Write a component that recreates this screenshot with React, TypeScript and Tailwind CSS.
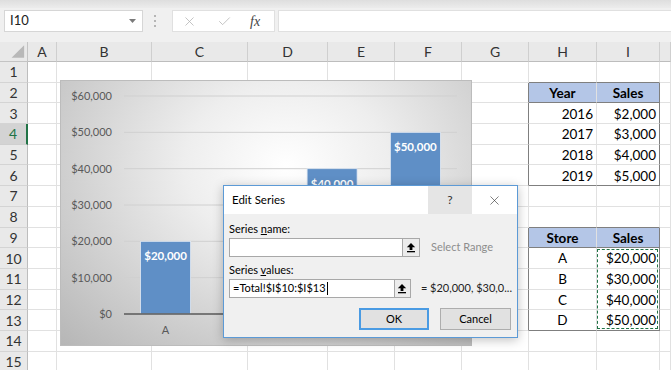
import { X, Check } from 'lucide-react'

const letters = ['A', 'B', 'C', 'D', 'E', 'F', 'G', 'H', 'I', '']
const rows = Array.from({ length: 15 }, (_, i) => i + 1)

const years = [
  ['2016', '$2,000'],
  ['2017', '$3,000'],
  ['2018', '$4,000'],
  ['2019', '$5,000'],
]
const stores = [
  ['A', '$20,000'],
  ['B', '$30,000'],
  ['C', '$40,000'],
  ['D', '$50,000'],
]

type Cell = { text: string; align: 'left' | 'center' | 'right'; bold?: boolean }

function cellData(r: number, c: number): Cell | null {
  if (r === 2 && c === 7) return { text: 'Year', align: 'center', bold: true }
  if (r === 2 && c === 8) return { text: 'Sales', align: 'center', bold: true }
  if (r >= 3 && r <= 6 && c === 7) return { text: years[r - 3][0], align: 'right' }
  if (r >= 3 && r <= 6 && c === 8) return { text: years[r - 3][1], align: 'right' }
  if (r === 9 && c === 7) return { text: 'Store', align: 'center', bold: true }
  if (r === 9 && c === 8) return { text: 'Sales', align: 'center', bold: true }
  if (r >= 10 && r <= 13 && c === 7) return { text: stores[r - 10][0], align: 'center' }
  if (r >= 10 && r <= 13 && c === 8) return { text: stores[r - 10][1], align: 'right' }
  return null
}

const inTable = (r: number) => (r >= 2 && r <= 6) || (r >= 9 && r <= 13)

function GridCell({ r, c }: { r: number; c: number }) {
  const d = cellData(r, c)
  const darkR = (c === 6 || c === 8) && inTable(r)
  const darkB = (c === 7 || c === 8) && [1, 2, 6, 8, 9, 13].includes(r)
  const head = (r === 2 || r === 9) && (c === 7 || c === 8)
  return (
    <div
      className={[
        'flex items-center border-r border-b px-[3px] pt-[1px] text-[13.5px] text-black',
        darkR ? 'border-r-[#7f7f7f]' : 'border-r-[#e1e1e1]',
        darkB ? 'border-b-[#7f7f7f]' : 'border-b-[#e1e1e1]',
        head ? 'bg-[#b4c6e7]' : 'bg-white',
        d?.align === 'center' ? 'justify-center' : d?.align === 'right' ? 'justify-end' : 'justify-start',
        d?.bold ? 'font-bold' : '',
      ].join(' ')}
    >
      {d?.text}
    </div>
  )
}

function UpArrow() {
  return (
    <svg width="10" height="11" viewBox="0 0 10 11">
      <path d="M5 1 L9.2 5.2 H6.4 V8 H3.6 V5.2 H0.8 Z" fill="#000" />
      <rect x="1" y="9" width="8" height="1.3" fill="#000" />
    </svg>
  )
}

function Chart() {
  const base = 233
  const step = 36.33
  const centers = [104.6, 187.9, 271.1, 354.4]
  const vals = [2, 3, 4, 5]
  const cats = ['A', 'B', 'C', 'D']
  return (
    <div className="absolute left-[60px] top-[80px] w-[412px] h-[266px] border border-[#bcbcbc] bg-[radial-gradient(ellipse_at_55%_32%,#ffffff_0%,#eeeeee_32%,#b6b6b6_100%)]">
      <svg width="410" height="264" className="font-['Lato']">
        {[0, 1, 2, 3, 4, 5, 6].map(i => (
          <g key={i}>
            {i > 0 && (
              <line x1="63" x2="396" y1={base - i * step} y2={base - i * step} stroke="#d0d0d0" strokeWidth="1" />
            )}
            <text x="51" y={base - i * step + 4} textAnchor="end" fontSize="11" fill="#595959">
              {i === 0 ? '$0' : `$${i * 10},000`}
            </text>
          </g>
        ))}
        {centers.map((cx, i) => {
          const h = vals[i] * step
          return (
            <g key={i}>
              <rect x={cx - 25} y={base - h} width="50" height={h} fill="#5f8fc6" stroke="#dfe8f3" strokeWidth="0.8" />
              <text x={cx} y={base - h + 19} textAnchor="middle" fontSize="11.5" fontWeight="700" fill="#fff">
                ${vals[i] * 10},000
              </text>
              <text x={cx} y="253" textAnchor="middle" fontSize="11" fill="#595959">
                {cats[i]}
              </text>
            </g>
          )
        })}
        <line x1="63" x2="396" y1={base} y2={base} stroke="#595959" strokeWidth="1.6" />
      </svg>
    </div>
  )
}

function EditSeries() {
  return (
    <div className="absolute left-[223px] top-[185px] w-[295px] h-[153px] border border-[#5c9ad6] bg-[#f0f0f0] shadow-[0_2px_10px_rgba(0,0,0,0.25)] text-[11px] text-black flex flex-col">
      <div className="h-[28px] bg-white flex items-stretch">
        <div className="flex-1 flex items-center pl-[8px] text-[11.5px]">Edit Series</div>
        <div className="w-[44px] bg-[#e5e5e5] flex items-center justify-center text-[12px] text-[#333]">?</div>
        <div className="w-[45px] flex items-center justify-center">
          <X size={15} strokeWidth={1} color="#333" />
        </div>
      </div>
      <div className="px-[5px] pt-[8px] flex flex-col">
        <div className="leading-[14px]">
          Series <u>n</u>ame:
        </div>
        <div className="mt-[2px] h-[19px] flex items-center">
          <div className="w-[174px] h-full bg-white border border-[#a8a8a8]" />
          <div className="w-[17px] h-full bg-[#ececec] border border-l-0 border-[#a8a8a8] flex items-center justify-center">
            <UpArrow />
          </div>
          <div className="ml-[11px] text-[#8d8d8d] whitespace-nowrap">Select Range</div>
        </div>
        <div className="mt-[6px] leading-[14px]">
          Series <u>v</u>alues:
        </div>
        <div className="mt-[2px] h-[19px] flex items-center">
          <div className="w-[174px] h-full bg-white border border-[#a8a8a8] flex items-center pl-[3px]">
            <span>=Total!$I$10:$I$13</span>
            <span className="ml-[1px] w-px h-[13px] bg-black" />
          </div>
          <div className="w-[17px] h-full bg-[#ececec] border border-l-0 border-[#a8a8a8] flex items-center justify-center">
            <UpArrow />
          </div>
          <div className="ml-[10px] text-[#222] whitespace-nowrap">= $20,000, $30,0...</div>
        </div>
        <div className="mt-[10px] flex justify-end gap-[11px] pr-[1px]">
          <div className="w-[70px] h-[22px] bg-[#e1e1e1] border-2 border-[#4a9be3] flex items-center justify-center">OK</div>
          <div className="w-[71px] h-[22px] bg-[#e1e1e1] border border-[#adadad] flex items-center justify-center">Cancel</div>
        </div>
      </div>
    </div>
  )
}

export default function App() {
  return (
    <div className="relative w-[671px] h-[370px] overflow-hidden bg-white font-['Lato',sans-serif]">
      {/* formula bar */}
      <div className="h-[42px] bg-[#f0f0f0] flex flex-col">
        <div className="h-[8px] bg-gradient-to-b from-[#dedede] to-[#ececec]" />
        <div className="mt-[2px] h-[22px] flex items-stretch pl-[4px]">
          <div className="w-[139px] bg-white border border-[#d6d6d6] flex items-center justify-between pl-[5px] pr-[6px] text-[13px] text-[#222]">
            <span>I10</span>
            <svg width="7" height="4" viewBox="0 0 7 4">
              <path d="M0 0 H7 L3.5 4 Z" fill="#7a7a7a" />
            </svg>
          </div>
          <div className="w-[29px] flex flex-col items-center justify-center gap-[3px] pr-[5px]">
            <span className="w-[2px] h-[2px] bg-[#b5b5b5]" />
            <span className="w-[2px] h-[2px] bg-[#b5b5b5]" />
            <span className="w-[2px] h-[2px] bg-[#b5b5b5]" />
          </div>
          <div className="w-[103px] bg-white border border-[#e0e0e0] flex items-center pl-[9px] gap-[20px]">
            <X size={15} strokeWidth={1.2} color="#b0b0b0" />
            <Check size={15} strokeWidth={1.2} color="#b0b0b0" />
            <span className="italic font-['Liberation_Serif',serif] text-[14px] text-[#444] ml-[-2px]">fx</span>
          </div>
          <div className="ml-[3px] flex-1 bg-white border-y border-l border-[#e0e0e0]" />
        </div>
      </div>

      {/* sheet grid */}
      <div className="grid grid-cols-[28px_29px_95px_96px_80px_67px_67px_67px_68px_63px_1fr] grid-rows-[20px_repeat(15,20.7px)]">
        <div className="bg-[#e9e9e9] border-r border-b border-[#c4c4c4] flex items-end justify-end">
          <svg width="28" height="20" viewBox="0 0 28 20">
            <polygon points="25,4 25,17 12,17" fill="#b8b8b8" />
          </svg>
        </div>
        {letters.map((l, i) => (
          <div
            key={i}
            className="bg-[#e9e9e9] border-r border-r-[#cfcfcf] border-b border-b-[#bdbdbd] flex items-center justify-center text-[14px] text-[#333]"
          >
            {l}
          </div>
        ))}
        {rows.map(r => (
          <div key={r} className="contents">
            <div
              className={
                r === 4
                  ? 'bg-[#d3d3d3] border-b border-b-[#cfcfcf] border-r-2 border-r-[#217346] flex items-center justify-center text-[14px] text-[#217346]'
                  : 'bg-[#e9e9e9] border-b border-b-[#d4d4d4] border-r border-r-[#bdbdbd] flex items-center justify-center text-[14px] text-[#333]'
              }
            >
              {r}
            </div>
            {letters.map((_, c) => (
              <GridCell key={c} r={r} c={c} />
            ))}
          </div>
        ))}
      </div>

      {/* copy selection marquee */}
      <div className="absolute left-[597px] top-[249px] w-[61px] h-[80px] border border-dashed border-[#217346]" />

      <Chart />
      <EditSeries />
    </div>
  )
}
